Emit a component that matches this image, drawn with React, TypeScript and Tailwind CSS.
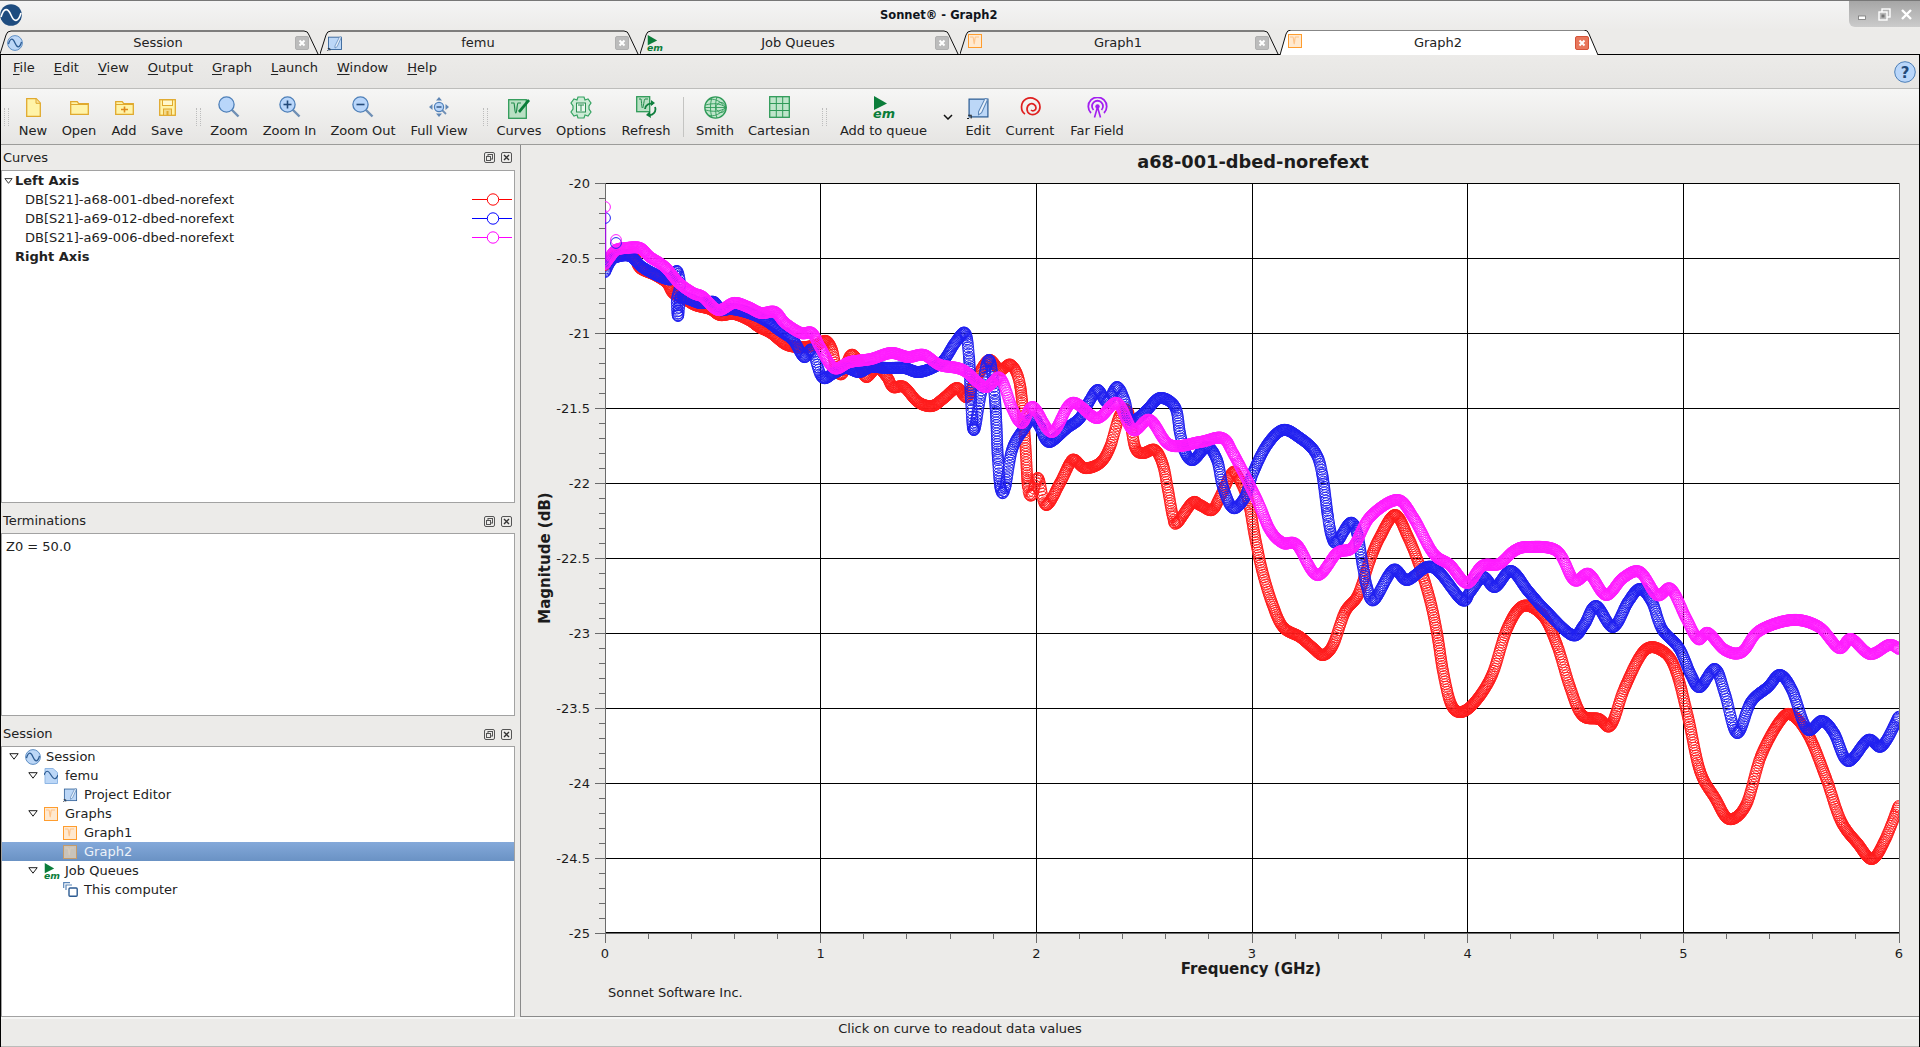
import React from 'react';

const FONT = "[font-family:'DejaVu_Sans',sans-serif]";

type Pt = [number, number];

const RED: Pt[] = [
  [605, 265], [612, 257], [622, 255], [634, 257], [640, 268], [655, 275], [667, 283], [673, 293], [683, 298], [695, 305],
  [710, 309], [720, 315], [734, 314], [749, 320], [759, 327], [771, 333], [785, 344], [797, 347], [806, 347], [816, 345],
  [826, 341], [832, 350], [836, 367], [842, 374], [851, 355], [859, 363], [866, 377], [877, 368], [887, 377], [893, 387],
  [904, 387], [918, 402], [932, 406], [944, 398], [957, 388], [967, 397], [977, 377], [989, 360], [1000, 370], [1011, 365],
  [1020, 385], [1025, 440], [1028, 487], [1032, 495], [1038, 478], [1046, 505], [1060, 483], [1070, 463], [1075, 460],
  [1085, 468], [1100, 463], [1110, 447], [1120, 415], [1128, 412], [1135, 447], [1143, 453], [1155, 450], [1163, 465],
  [1168, 490], [1173, 517], [1177, 523], [1192, 503], [1200, 505], [1212, 510], [1220, 497], [1232, 473], [1238, 477],
  [1248, 500], [1255, 537], [1262, 570], [1272, 603], [1283, 627], [1300, 637], [1313, 648], [1323, 655], [1333, 645],
  [1345, 612], [1358, 595], [1370, 560], [1380, 537], [1395, 515], [1408, 537], [1420, 567], [1430, 600], [1437, 633],
  [1443, 671], [1451, 704], [1461, 712], [1475, 702], [1492, 675], [1507, 629], [1523, 606], [1543, 616], [1557, 645],
  [1570, 687], [1582, 715], [1599, 719], [1611, 725], [1625, 687], [1645, 650], [1664, 652], [1676, 671], [1688, 717],
  [1700, 771], [1715, 798], [1729, 819], [1746, 805], [1761, 756], [1780, 721], [1792, 715], [1809, 736], [1826, 778],
  [1841, 821], [1858, 844], [1872, 859], [1885, 840], [1899, 805],
];

const BLUE: Pt[] = [
  [605, 272], [610, 262], [616, 257], [630, 256], [642, 267], [661, 277], [672, 279], [677, 271], [680, 285],
  [677, 300], [678, 316], [680, 300], [683, 297], [700, 303], [714, 302], [720, 310], [732, 309], [749, 313], [765, 320],
  [779, 330], [793, 340], [804, 357], [812, 350], [822, 377], [834, 373], [846, 368], [859, 372], [871, 367], [887, 368],
  [904, 368], [918, 372], [932, 368], [944, 360], [955, 343], [965, 333], [969, 357], [971, 400], [974, 430], [981, 393],
  [989, 360], [995, 400], [998, 460], [1001, 490], [1005, 488], [1012, 450], [1023, 430], [1033, 418], [1040, 427],
  [1049, 442], [1067, 428], [1080, 418], [1090, 400], [1098, 390], [1107, 402], [1117, 387], [1125, 402], [1128, 417],
  [1135, 420], [1147, 410], [1160, 398], [1175, 407], [1180, 433], [1185, 452], [1193, 460], [1207, 447], [1217, 460],
  [1223, 487], [1233, 508], [1245, 497], [1253, 473], [1267, 445], [1283, 430], [1300, 438], [1315, 452], [1322, 473],
  [1328, 517], [1332, 537], [1337, 542], [1350, 523], [1357, 533], [1363, 567], [1367, 587], [1374, 600], [1393, 570],
  [1407, 580], [1427, 567], [1440, 573], [1462, 600], [1470, 592], [1483, 577], [1495, 587], [1511, 571], [1528, 591],
  [1545, 610], [1572, 635], [1584, 625], [1596, 606], [1613, 627], [1628, 602], [1640, 589], [1652, 602], [1662, 629],
  [1679, 648], [1691, 675], [1700, 687], [1715, 669], [1725, 694], [1737, 733], [1751, 702], [1768, 687], [1780, 675],
  [1792, 690], [1807, 729], [1822, 721], [1834, 733], [1848, 761], [1868, 740], [1882, 746], [1899, 716],
];

const MAGENTA: Pt[] = [
  [605, 264], [610, 257], [616, 250], [626, 248], [640, 248], [650, 257], [665, 267],
  [679, 283], [693, 293], [703, 297], [718, 310], [734, 303], [748, 307], [761, 313], [775, 312], [785, 323], [801, 333],
  [812, 333], [820, 347], [834, 368], [850, 362], [871, 359], [891, 353], [908, 357], [924, 355], [940, 365], [963, 370],
  [985, 387], [1000, 378], [1012, 408], [1022, 423], [1033, 407], [1052, 432], [1072, 403], [1097, 418], [1117, 403],
  [1133, 430], [1150, 420], [1170, 445], [1200, 442], [1222, 438], [1233, 453], [1257, 500], [1270, 530], [1283, 543],
  [1297, 545], [1317, 575], [1337, 553], [1353, 547], [1370, 517], [1397, 500], [1413, 517], [1433, 553], [1450, 565],
  [1467, 583], [1482, 566], [1499, 564], [1514, 551], [1528, 547], [1557, 551], [1574, 580], [1589, 574], [1606, 595],
  [1623, 578], [1640, 572], [1657, 595], [1671, 589], [1686, 618], [1698, 639], [1708, 633], [1725, 650], [1742, 652],
  [1759, 631], [1792, 620], [1819, 627], [1839, 648], [1851, 639], [1870, 654], [1889, 645], [1899, 649],
];

// catmull-rom through the picked points: under a pixel per sample in x, so only the steep parts open up into rings
function sample(pts: Pt[]): Pt[] {
  const out: Pt[] = [];
  for (let i = 0; i < pts.length - 1; i++) {
    const a = pts[Math.max(i - 1, 0)];
    const b = pts[i];
    const c = pts[i + 1];
    const d = pts[Math.min(i + 2, pts.length - 1)];
    const n = Math.ceil(Math.max(Math.abs(c[0] - b[0]) / 0.8, Math.hypot(c[0] - b[0], c[1] - b[1]) / 2.6)) || 1;
    for (let j = 0; j < n; j++) {
      const t = j / n;
      const q = (k: 0 | 1) =>
        0.5 *
        (2 * b[k] +
          (c[k] - a[k]) * t +
          (2 * a[k] - 5 * b[k] + 4 * c[k] - d[k]) * t * t +
          (3 * b[k] - a[k] - 3 * c[k] + d[k]) * t * t * t);
      out.push([Math.round(q(0) * 10) / 10, Math.round(q(1) * 10) / 10]);
    }
  }
  return out;
}

const SERIES = [
  { color: '#ff1c1c', points: sample(RED) },
  { color: '#2020f0', points: sample(BLUE) },
  { color: '#ff1cff', points: sample(MAGENTA) },
];

const X0 = 605;
const X1 = 1899;
const Y0 = 183;
const Y1 = 933;
const PX_PER_GHZ = (X1 - X0) / 6;

function Chart() {
  const xTicks = Array.from({ length: 31 }, (_, i) => i);
  const yTicks = Array.from({ length: 51 }, (_, i) => i);
  return (
    <svg viewBox="521 145 1398 871" className="block w-[1398px] h-[871px]" fontFamily="'DejaVu Sans', sans-serif">
      <defs>
        <clipPath id="plot">
          <rect x={X0} y={Y0} width={X1 - X0} height={Y1 - Y0} />
        </clipPath>
      </defs>
      <text x="1253" y="161" textAnchor="middle" dominantBaseline="central" fontSize="17.800" fontWeight="700" fill="#1c1c1c">
        a68-001-dbed-norefext
      </text>
      <rect x={X0} y={Y0} width={X1 - X0} height={Y1 - Y0} fill="#fff" />
      <g stroke="#000" strokeWidth="1" shapeRendering="crispEdges">
        {[1, 2, 3, 4, 5].map((k) => (
          <line key={k} x1={X0 + k * PX_PER_GHZ} x2={X0 + k * PX_PER_GHZ} y1={Y0} y2={Y1} />
        ))}
        {[1, 2, 3, 4, 5, 6, 7, 8, 9].map((k) => (
          <line key={k} x1={X0} x2={X1} y1={Y0 + k * 75} y2={Y0 + k * 75} />
        ))}
        <line x1={X0} x2={X1} y1={Y0} y2={Y0} />
        <line x1={X0} x2={X1} y1={Y1 - 1} y2={Y1 - 1} />
      </g>
      <g stroke="#6b6b6b" strokeWidth="1" shapeRendering="crispEdges">
        <line x1={X0} x2={X0} y1={Y0} y2={Y1} />
        <line x1={X1} x2={X1} y1={Y0} y2={Y1} />
        <line x1={X0} x2={X1} y1={Y1} y2={Y1} />
        {xTicks.map((i) => (
          <line key={i} x1={X0 + (i * PX_PER_GHZ) / 5} x2={X0 + (i * PX_PER_GHZ) / 5} y1={Y1} y2={Y1 + (i % 5 === 0 ? 10 : 6)} />
        ))}
        {yTicks.map((i) => (
          <line key={i} x1={X0 - (i % 5 === 0 ? 10 : 6)} x2={X0} y1={Y0 + i * 15} y2={Y0 + i * 15} />
        ))}
      </g>
      <g clipPath="url(#plot)" fill="none" strokeWidth="1">
        {SERIES.map((s) => (
          <g key={s.color} stroke={s.color}>
            {s.points.map((p, i) => (
              <circle key={i} cx={p[0]} cy={p[1]} r="5.5" />
            ))}
          </g>
        ))}
        {/* stray first samples above the band */}
        <path d="M605.500 210V262" stroke="#a010e0" strokeWidth="1.500" />
        <circle cx="605" cy="218" r="5.400" stroke="#2020f0" />
        <circle cx="605" cy="207" r="5.400" stroke="#ff1cff" />
        <circle cx="616" cy="243" r="5.400" stroke="#2020f0" />
        <circle cx="616" cy="240" r="5.400" stroke="#ff1cff" />
      </g>
      <g fontSize="13" fill="#1c1c1c">
        {['-20', '-20.5', '-21', '-21.5', '-22', '-22.5', '-23', '-23.5', '-24', '-24.5', '-25'].map((t, i) => (
          <text key={t} x="590" y={Y0 + i * 75} textAnchor="end" dominantBaseline="central">
            {t}
          </text>
        ))}
        {[0, 1, 2, 3, 4, 5, 6].map((t) => (
          <text key={t} x={X0 + t * PX_PER_GHZ} y="953" textAnchor="middle" dominantBaseline="central">
            {t}
          </text>
        ))}
        <text x="608" y="992" dominantBaseline="central">
          Sonnet Software Inc.
        </text>
      </g>
      <g fontSize="15" fontWeight="700" fill="#1c1c1c">
        <text x="1251" y="969" textAnchor="middle" dominantBaseline="central">
          Frequency (GHz)
        </text>
        <text x="545" y="558" textAnchor="middle" dominantBaseline="central" transform="rotate(-90 545 558)">
          Magnitude (dB)
        </text>
      </g>
    </svg>
  );
}

type IconProps = { className?: string };

function SessionIcon({ className = 'w-[16px] h-[16px]' }: IconProps) {
  return (
    <svg viewBox="0 0 16 16" className={className}>
      <circle cx="8" cy="8" r="7.4" fill="#bcd7f7" stroke="#5f8fc4" />
      <path d="M1.5 9C3.5 2.5 5.8 3 8 8s4.5 5.5 6.5-1" fill="none" stroke="#2c5b92" strokeWidth="1.3" />
    </svg>
  );
}

function LogoIcon() {
  return (
    <svg viewBox="0 0 22 22" className="w-[22px] h-[22px]">
      <circle cx="11" cy="11" r="10.8" fill="#1e4c7f" />
      <path d="M1 13C4 3 8 4 11 11s7 8 10-2" fill="none" stroke="#fff" strokeWidth="1.6" />
    </svg>
  );
}

function FileWaveIcon({ className = 'w-[14px] h-[16px]' }: IconProps) {
  return (
    <svg viewBox="0 0 14 16" className={className}>
      <path d="M1 .5h8l4.5 4v11H1z" fill="#bcd7f7" stroke="#8eb6e4" />
      <path d="M0 7C2 2 4 2 7 7s5 5 7 0" fill="none" stroke="#2c5b92" strokeWidth="1.2" />
    </svg>
  );
}

function EditIcon({ className = 'w-[16px] h-[16px]' }: IconProps) {
  return (
    <svg viewBox="0 0 22 22" className={className}>
      <rect x="2" y="3" width="18" height="17" fill="#bcd7f7" stroke="#2f5f96" strokeWidth="1.2" />
      <path d="M11 15l6-12c.6-1.2 3-.4 2.400 1L14 16l-3 2z" fill="#e8f1fb" stroke="#5b86b8" strokeWidth="1" />
      <path d="M1 18.500h3v3M0 21.500h2" fill="none" stroke="#222" strokeWidth="1" />
    </svg>
  );
}

function GraphIcon({ className = 'w-[14px] h-[14px]', muted = false }: IconProps & { muted?: boolean }) {
  return (
    <svg viewBox="0 0 14 14" className={className}>
      <rect x=".5" y=".5" width="13" height="13" fill={muted ? '#c9c3ba' : '#ffe9d0'} stroke={muted ? '#c39b6c' : '#ff9d2e'} />
      <path d="M2 3h3c.6 0 .8 7 1.200 7s.6-7 1.200-7H11" fill="none" stroke={muted ? '#d8ccbc' : '#ffc48a'} strokeWidth="1.2" />
    </svg>
  );
}

function EmIcon({ className = 'w-[16px] h-[16px]' }: IconProps) {
  return (
    <svg viewBox="0 0 22 22" className={`overflow-visible ${className}`}>
      <path d="M1 0l13 7.500L1 14z" fill="#0b7d3a" />
      <text x="0" y="21.500" fontFamily="'DejaVu Sans', sans-serif" fontStyle="italic" fontSize="12" fontWeight="700" fill="#0b7d3a" textLength="22" lengthAdjust="spacingAndGlyphs">
        em
      </text>
    </svg>
  );
}

function ComputerIcon() {
  return (
    <svg viewBox="0 0 15 15" className="w-[15px] h-[15px]">
      <path d="M.7 6V.7H7M3 8V3h6" fill="none" stroke="#5a86b8" strokeWidth="1.200" />
      <rect x="6" y="6" width="8.200" height="8.200" rx="1" fill="#fff" stroke="#2c5b92" strokeWidth="1.400" />
    </svg>
  );
}

function Triangle({ className = 'w-[10px] h-[7px]' }: IconProps) {
  return (
    <svg viewBox="0 0 10 7" className={className}>
      <path d="M.8.7h8.400L5 6.200z" fill="#fff" stroke="#1c1c1c" strokeWidth="1" />
    </svg>
  );
}

function TabClose({ active = false }: { active?: boolean }) {
  return (
    <svg viewBox="0 0 14 14" className="w-[14px] h-[14px] shrink-0">
      <rect x=".5" y=".5" width="13" height="13" rx="1.500" fill={active ? '#e8775c' : '#bcbcbc'} stroke={active ? '#d4543a' : '#b0b0b0'} />
      <path d="M4.500 4.500l5 5m0-5l-5 5" stroke="#fff" strokeWidth="2" />
    </svg>
  );
}

function DockButtons() {
  return (
    <div className="flex items-center gap-[6px] pr-[8px]">
      <svg viewBox="0 0 11 11" className="w-[11px] h-[11px]">
        <rect x=".5" y=".5" width="10" height="10" rx="1.500" fill="none" stroke="#555" />
        <rect x="4" y="2.500" width="4.500" height="4.500" fill="none" stroke="#555" />
        <rect x="2.500" y="4.500" width="4" height="4" fill="#ecebe9" stroke="#555" />
      </svg>
      <svg viewBox="0 0 11 11" className="w-[11px] h-[11px]">
        <rect x=".5" y=".5" width="10" height="10" rx="1.500" fill="none" stroke="#555" />
        <path d="M3 3l5 5m0-5l-5 5" stroke="#333" strokeWidth="1.400" />
      </svg>
    </div>
  );
}

const TABS = [
  { name: 'Session', icon: <SessionIcon /> },
  { name: 'femu', icon: <EditIcon /> },
  { name: 'Job Queues', icon: <EmIcon /> },
  { name: 'Graph1', icon: <GraphIcon className="w-[14px] h-[14px] mt-[-4px]" /> },
  { name: 'Graph2', icon: <GraphIcon className="w-[14px] h-[14px] mt-[-4px]" />, active: true },
];

function Tab({ name, icon, active = false }: { name: string; icon: React.ReactNode; active?: boolean }) {
  return (
    <div className={`relative w-[320px] h-[25px] shrink-0 ${active ? 'z-10' : ''}`}>
      <svg viewBox="0 0 320 25" className="absolute inset-0 w-[320px] h-[25px]">
        {active ? (
          <>
            <path d="M0 25L6 4Q7 0 11 0H304Q308 0 309 4L318 25z" fill="#fff" />
            <path d="M0 25L6 4Q7 0 11 0H304Q308 0 309 4L318 25" fill="none" stroke="#111" />
          </>
        ) : (
          <path d="M0 24L6 5Q7 1 11 1H304Q308 1 309 5L318 24" fill="#ecebe9" stroke="#111" />
        )}
      </svg>
      <div className="relative flex items-center h-[24px] pl-[7px] pr-[11px] pt-[2px] text-[13px] text-[#222]">
        <span className="w-[16px] h-[16px] flex items-center justify-center shrink-0">{icon}</span>
        <span className="flex-1 text-center pr-[2px]">{name}</span>
        <TabClose active={active} />
      </div>
    </div>
  );
}

function MenuItem({ label }: { label: string }) {
  return (
    <span>
      <span className="underline underline-offset-2">{label[0]}</span>
      {label.slice(1)}
    </span>
  );
}

function Grip({ className }: { className: string }) {
  return (
    <div className={`flex justify-center shrink-0 pt-[19px] ${className}`}>
      <div className="w-[5px] h-[18px] border-x border-dotted border-[#bdbdbd]" />
    </div>
  );
}

function ToolButton({ label, width, icon }: { label: string; width: string; icon: React.ReactNode }) {
  return (
    <div className={`flex flex-col items-center shrink-0 pt-[6px] ${width}`}>
      <div className="h-[24px] flex items-center justify-center">{icon}</div>
      <div className="h-[18px] mt-[3px] leading-[18px] whitespace-nowrap">{label}</div>
    </div>
  );
}

function Magnifier({ sign }: { sign?: 'plus' | 'minus' }) {
  return (
    <svg viewBox="0 0 22 22" className="w-[22px] h-[22px]">
      <path d="M13.500 13.500L20.500 20.500" stroke="#6f8fb5" strokeWidth="2.400" />
      <circle cx="8.500" cy="8.500" r="7.600" fill="#b9d6fa" stroke="#4d7fb8" strokeWidth="1.300" />
      {sign && <path d="M4.500 8.500h8" stroke="#234a7a" strokeWidth="1.600" />}
      {sign === 'plus' && <path d="M8.500 4.500v8" stroke="#234a7a" strokeWidth="1.600" />}
    </svg>
  );
}

const Y_FILL = '#fff3a8';
const Y_LINE = '#e0a92e';

const ICONS = {
  newDoc: (
    <svg viewBox="0 0 15 19" className="w-[15px] h-[19px]">
      <path d="M.7.7h9.500L14.300 5v13.300H.7z" fill={Y_FILL} stroke={Y_LINE} strokeWidth="1.300" />
      <path d="M10 1v4.300h4" fill="#fbe39a" stroke={Y_LINE} />
    </svg>
  ),
  open: (
    <svg viewBox="0 0 19 15" className="w-[19px] h-[15px]">
      <path d="M.7 14.300V1.700h6.500l1.500 2h9.600v10.600z" fill={Y_FILL} stroke={Y_LINE} strokeWidth="1.300" />
      <path d="M.7 4.500h17.600" stroke={Y_LINE} />
    </svg>
  ),
  add: (
    <svg viewBox="0 0 19 15" className="w-[19px] h-[15px]">
      <path d="M.7 14.300V1.700h6.500l1.500 2h9.600v10.600z" fill={Y_FILL} stroke={Y_LINE} strokeWidth="1.300" />
      <path d="M.7 4.500h17.600" stroke={Y_LINE} />
      <path d="M6 9.500h7M9.500 6.500v6" stroke="#dd8a1c" strokeWidth="1.600" />
    </svg>
  ),
  save: (
    <svg viewBox="0 0 17 17" className="w-[17px] h-[17px]">
      <rect x=".7" y=".7" width="15.600" height="15.600" fill={Y_FILL} stroke={Y_LINE} strokeWidth="1.300" />
      <rect x="3.500" y="1" width="10" height="5.500" fill="#fff8cc" stroke={Y_LINE} />
      <rect x="4.500" y="10" width="8" height="6.300" fill="#f3d98a" stroke={Y_LINE} />
      <rect x="7.500" y="12" width="2" height="4" fill={Y_LINE} />
    </svg>
  ),
  fullView: (
    <svg viewBox="0 0 20 20" className="w-[20px] h-[20px]">
      <path d="M10 0l3 3.500H7zM10 20l3-3.500H7zM0 10l3.500-3v6zM20 10l-3.500-3v6z" fill="#5f86b4" />
      <path d="M13 13l4 4" stroke="#6f8fb5" strokeWidth="1.800" />
      <circle cx="10" cy="10" r="4.600" fill="#b9d6fa" stroke="#4d7fb8" strokeWidth="1.200" />
      <path d="M7.500 10h5" stroke="#234a7a" strokeWidth="1.300" />
    </svg>
  ),
  curves: (
    <svg viewBox="0 0 23 23" className="w-[23px] h-[23px]">
      <rect x=".7" y="3.700" width="17.600" height="18.600" fill="#b9e0c4" stroke="#2f9a58" strokeWidth="1.300" />
      <path d="M3 7h3c.6 0 .6 10 1.800 10S9 7 10 7h3" fill="none" stroke="#1f8a4a" strokeWidth="1.200" />
      <path d="M10 15L20 3l2 2-10 12z" fill="#0b7d3a" />
    </svg>
  ),
  options: (
    <svg viewBox="0 0 22 23" className="w-[22px] h-[23px]">
      <path d="M8 1h6l1 3 3-1 3 4-2 3v3l2 3-3 4-3-1-1 3H8l-1-3-3 1-3-4 2-3v-3L1 7l3-4 3 1z" fill="#cdebd6" stroke="#35a362" strokeWidth="1.200" />
      <rect x="6.500" y="7" width="9" height="9" fill="#e9f6ed" stroke="#2a8f52" />
      <path d="M8 9h6M11 9v6" stroke="#2a8f52" />
    </svg>
  ),
  refresh: (
    <svg viewBox="0 0 21 23" className="w-[21px] h-[23px]">
      <rect x=".7" y=".7" width="13" height="15" fill="#b9e0c4" stroke="#2f9a58" strokeWidth="1.300" />
      <path d="M3 3h2c.5 0 .5 9 1.500 9S8 3 9 3h3" fill="none" stroke="#1f8a4a" />
      <path d="M9 13a6 6 0 0 1 8-5M19 11a6 6 0 0 1-7 8" fill="none" stroke="#0f7f3e" strokeWidth="1.800" />
      <path d="M15 4l4 3-4 3zM14 15l-4 4 5 3z" fill="#0f7f3e" />
    </svg>
  ),
  smith: (
    <svg viewBox="0 0 23 23" className="w-[23px] h-[23px]">
      <circle cx="11.500" cy="11.500" r="10.700" fill="#bfe5cb" stroke="#2f9a58" strokeWidth="1.300" />
      <g fill="none" stroke="#2f9a58" strokeWidth=".9">
        <path d="M1 11.500h21M22 11.500C14 2 6 2 3 5M22 11.500C14 21 6 21 3 18M22 11.500C16 7 9 7 1.500 9M22 11.500C16 16 9 16 1.500 14" />
        <circle cx="17" cy="11.500" r="5" />
        <path d="M8 1.500c-2 6-2 14 0 20M13 1c-2 6-2 15 0 21" />
      </g>
    </svg>
  ),
  cartesian: (
    <svg viewBox="0 0 21 22" className="w-[21px] h-[22px]">
      <rect x=".7" y=".7" width="19.600" height="20.600" fill="#bfe5cb" stroke="#2f9a58" strokeWidth="1.300" />
      <path d="M7.300 1v20M13.700 1v20M1 7.500h19M1 14.500h19" stroke="#2f9a58" />
    </svg>
  ),
  current: (
    <svg viewBox="0 0 21 20" className="w-[21px] h-[20px]">
      <path d="M5 17C0 14 .5 5 6 2c6-3 14 1 14 8 0 5-5 9-10 7-4-2-4-8 0-10 3-1 6 1 6 4 0 2-3 4-5 2" fill="none" stroke="#df1f1f" strokeWidth="1.700" />
    </svg>
  ),
  farField: (
    <svg viewBox="0 0 21 21" className="w-[21px] h-[21px]">
      <g fill="none" stroke="#a31ff0" strokeWidth="1.800">
        <path d="M4 16a9.200 9.200 0 1 1 13 0" />
        <path d="M6.500 13a5.500 5.500 0 1 1 8 0" />
      </g>
      <circle cx="10.500" cy="9.500" r="2.200" fill="#a31ff0" />
      <path d="M10.500 10L7.500 20.500M10.500 10l3 10.500" stroke="#a31ff0" strokeWidth="1.600" />
    </svg>
  ),
};

function Legend({ color }: { color: string }) {
  return (
    <svg viewBox="0 0 40 13" className="w-[40px] h-[13px]">
      <path d="M0 6.500h40" stroke={color} />
      <circle cx="21" cy="6.500" r="5.700" fill="#fff" stroke={color} />
    </svg>
  );
}

const CURVES = [
  { name: 'DB[S21]-a68-001-dbed-norefext', color: '#ff0000' },
  { name: 'DB[S21]-a69-012-dbed-norefext', color: '#0000ff' },
  { name: 'DB[S21]-a69-006-dbed-norefext', color: '#ff00ff' },
];

const LEVEL_PAD = ['pl-[7px]', 'pl-[26px]', 'pl-[45px]'];

function TreeRow({
  level,
  label,
  icon,
  open = false,
  selected = false,
}: {
  level: number;
  label: string;
  icon: React.ReactNode;
  open?: boolean;
  selected?: boolean;
}) {
  return (
    <div
      className={`flex items-center h-[19px] ${LEVEL_PAD[level]} ${
        selected ? 'bg-linear-to-b from-[#84a9da] to-[#6a92c4] text-[#edf2f9]' : ''
      }`}
    >
      <span className="w-[16px] flex items-center shrink-0">{open && <Triangle />}</span>
      <span className="w-[21px] flex items-center shrink-0">{icon}</span>
      <span className="leading-[19px] whitespace-nowrap">{label}</span>
    </div>
  );
}

export default function App() {
  return (
    <div className={`w-[1920px] h-[1047px] overflow-hidden flex flex-col bg-[#ecebe9] text-[13px] text-[#222] ${FONT}`}>
      <div className="h-[30px] shrink-0 border-t border-[#777] bg-linear-to-b from-[#f4f4f4] to-[#ecebe9] grid grid-cols-[880px_auto_1fr] items-start">
        <div className="pt-[3px]">
          <LogoIcon />
        </div>
        <div className="pt-[6px] font-bold text-[11.5px] leading-[16px] text-[#10151c]">Sonnet® - Graph2</div>
        <div className="justify-self-end w-[71px] h-[26px] rounded-bl-[6px] bg-linear-to-b from-[#a6a6a6] to-[#cbcbcb] flex items-center justify-center gap-[9px]">
          <svg viewBox="0 0 13 13" className="w-[13px] h-[13px]">
            <rect x="2.500" y="8" width="7" height="3.500" fill="#fff" stroke="#777" strokeWidth=".8" />
          </svg>
          <svg viewBox="0 0 13 13" className="w-[13px] h-[13px]">
            <rect x="4" y="1" width="8" height="8" fill="none" stroke="#fff" strokeWidth="1.400" />
            <rect x="1" y="4" width="8" height="8" fill="#b8b8b8" stroke="#fff" strokeWidth="1.400" />
            <rect x="3.500" y="6.500" width="3" height="3" fill="#777" />
          </svg>
          <svg viewBox="0 0 13 13" className="w-[13px] h-[13px]">
            <path d="M2 2l9 9m0-9l-9 9" stroke="#fff" strokeWidth="2.400" />
          </svg>
        </div>
      </div>

      <div className="h-[24px] shrink-0 flex">
        {TABS.map((t) => (
          <Tab key={t.name} {...t} />
        ))}
      </div>

      <div className="flex-1 min-h-0 flex flex-col border-t border-x border-black">
        <div className="h-[34px] shrink-0 flex items-center gap-[19px] pl-[12px] pr-[3px] pb-[8px] border-b border-[#bdbdbb] bg-linear-to-b from-[#ecebe9] to-[#e6e5e3]">
          {['File', 'Edit', 'View', 'Output', 'Graph', 'Launch', 'Window', 'Help'].map((m) => (
            <MenuItem key={m} label={m} />
          ))}
          <svg viewBox="0 0 22 22" className="ml-auto mt-[8px] w-[22px] h-[22px]">
            <circle cx="11" cy="11" r="10.300" fill="#b9d6fa" stroke="#4d7fb8" />
            <text x="11" y="16.500" textAnchor="middle" fontSize="15" fontWeight="700" fill="#234a7a">
              ?
            </text>
          </svg>
        </div>

        <div className="h-[56px] shrink-0 flex border-b border-[#9c9c9a] bg-linear-to-b from-[#f6f6f5] to-[#e6e5e3]">
          <Grip className="w-[11px]" />
          <ToolButton label="New" width="w-[42px]" icon={ICONS.newDoc} />
          <ToolButton label="Open" width="w-[50px]" icon={ICONS.open} />
          <ToolButton label="Add" width="w-[40px]" icon={ICONS.add} />
          <ToolButton label="Save" width="w-[46px]" icon={ICONS.save} />
          <Grip className="w-[17px]" />
          <ToolButton label="Zoom" width="w-[44px]" icon={<Magnifier />} />
          <ToolButton label="Zoom In" width="w-[77px]" icon={<Magnifier sign="plus" />} />
          <ToolButton label="Zoom Out" width="w-[70px]" icon={<Magnifier sign="minus" />} />
          <ToolButton label="Full View" width="w-[82px]" icon={ICONS.fullView} />
          <Grip className="w-[10px]" />
          <ToolButton label="Curves" width="w-[58px]" icon={ICONS.curves} />
          <ToolButton label="Options" width="w-[66px]" icon={ICONS.options} />
          <ToolButton label="Refresh" width="w-[64px]" icon={ICONS.refresh} />
          <div className="w-[10px] shrink-0 flex justify-center pt-[8px]">
            <div className="w-px h-[40px] bg-[#c4c4c2]" />
          </div>
          <ToolButton label="Smith" width="w-[54px]" icon={ICONS.smith} />
          <ToolButton label="Cartesian" width="w-[74px]" icon={ICONS.cartesian} />
          <Grip className="w-[17px]" />
          <ToolButton label="Add to queue" width="w-[101px]" icon={<EmIcon className="w-[22px] h-[22px]" />} />
          <div className="w-[28px] shrink-0 flex justify-center pt-[25px]">
            <svg viewBox="0 0 10 6" className="w-[10px] h-[6px]">
              <path d="M1 1l4 4 4-4" fill="none" stroke="#111" strokeWidth="1.500" />
            </svg>
          </div>
          <ToolButton label="Edit" width="w-[32px]" icon={<EditIcon className="w-[23px] h-[23px]" />} />
          <ToolButton label="Current" width="w-[72px]" icon={ICONS.current} />
          <ToolButton label="Far Field" width="w-[62px]" icon={ICONS.farField} />
        </div>

        <div className="h-[872px] shrink-0 flex">
          <div className="w-[519px] shrink-0 flex flex-col">
            <div className="h-[25px] flex items-center justify-between pl-[2px]">
              <span>Curves</span>
              <DockButtons />
            </div>
            <div className="h-[333px] mr-[5px] border border-[#a2a2a2] bg-white">
              <div className="flex items-center h-[19px] pl-[2px] font-bold">
                <span className="w-[11px] flex items-center">
                  <Triangle className="w-[9px] h-[6px]" />
                </span>
                Left Axis
              </div>
              {CURVES.map((c) => (
                <div key={c.name} className="flex items-center justify-between h-[19px] pl-[23px] pr-[2px]">
                  <span>{c.name}</span>
                  <Legend color={c.color} />
                </div>
              ))}
              <div className="flex items-center h-[19px] pl-[13px] font-bold">Right Axis</div>
            </div>

            <div className="h-[30px] flex items-center justify-between pl-[2px] pt-[6px]">
              <span>Terminations</span>
              <DockButtons />
            </div>
            <div className="h-[183px] mr-[5px] border border-[#a2a2a2] bg-white pl-[4px] pt-[3px]">Z0 = 50.0</div>

            <div className="h-[30px] flex items-center justify-between pl-[2px] pt-[6px]">
              <span>Session</span>
              <DockButtons />
            </div>
            <div className="h-[271px] mr-[5px] border border-[#a2a2a2] bg-white">
              <TreeRow level={0} open label="Session" icon={<SessionIcon />} />
              <TreeRow level={1} open label="femu" icon={<FileWaveIcon />} />
              <TreeRow level={2} label="Project Editor" icon={<EditIcon className="w-[15px] h-[15px]" />} />
              <TreeRow level={1} open label="Graphs" icon={<GraphIcon />} />
              <TreeRow level={2} label="Graph1" icon={<GraphIcon />} />
              <TreeRow level={2} selected label="Graph2" icon={<GraphIcon muted />} />
              <TreeRow level={1} open label="Job Queues" icon={<EmIcon />} />
              <TreeRow level={2} label="This computer" icon={<ComputerIcon />} />
            </div>
          </div>

          <div className="flex-1 min-w-0 h-[872px] border-l border-b border-[#8a8a8a]">
            <Chart />
          </div>
        </div>

        <div className="flex-1 min-h-0 pb-[8px] border-t-2 border-t-[#f6f6f5] border-b border-b-[#bcbcba] flex items-center justify-center">
          Click on curve to readout data values
        </div>
      </div>
    </div>
  );
}
